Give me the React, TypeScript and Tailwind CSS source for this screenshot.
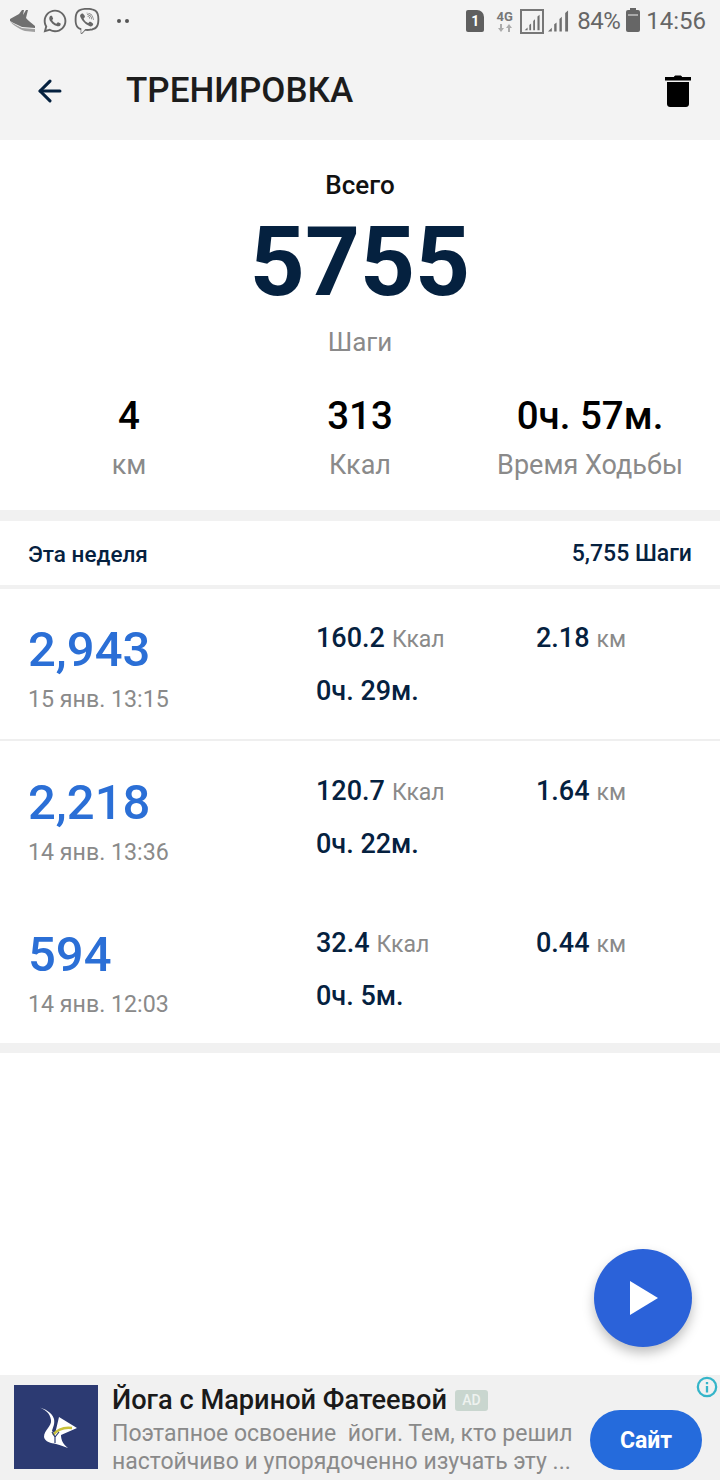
import { ArrowLeft } from "lucide-react";
import { FaViber, FaWhatsapp } from "react-icons/fa";

const workouts = [
  { steps: "2,943", date: "15 янв. 13:15", kcal: "160.2", km: "2.18", time: "0ч. 29м.", height: "h-[150px]" },
  { steps: "2,218", date: "14 янв. 13:36", kcal: "120.7", km: "1.64", time: "0ч. 22м.", height: "h-[152px]" },
  { steps: "594", date: "14 янв. 12:03", kcal: "32.4", km: "0.44", time: "0ч. 5м.", height: "h-[149px]" },
];

function Shoe() {
  return (
    <svg viewBox="0 0 25 22" className="h-[22px] w-[25px]">
      <path d="M0 9 L9 4 L12 0 L14 0 L13 5 L16 0 L18 0 L16 8 C18 11 22 13 25 16 L25 18 L12 17 C8 15 3 13 0 11 Z" fill="#707070" />
      <path d="M0 11.500 C4 14 8 16 12 18 L25 19 L25 22 L15 21 C9 19 3 15 0 11.500 Z" fill="#a0a0a0" />
    </svg>
  );
}

function SimCard() {
  return (
    <div className="flex h-[22px] w-[18px] items-center justify-center rounded-[2px] rounded-tr-[7px] bg-[#5f5f5f] text-[14px] leading-none font-bold text-white">
      1
    </div>
  );
}

function Bars({ className }: { className: string }) {
  return (
    <svg viewBox="0 0 22 24" className={className} fill="#6f6f6f">
      <path d="M0 23 L4 19 L4 23 Z" />
      <path d="M6.500 15.500 L9 13.500 L9 23 L6.500 23 Z" />
      <path d="M12 10 L14.500 7.500 L14.500 23 L12 23 Z" />
      <path d="M18 3.500 L21 1 L21 23 L18 23 Z" />
    </svg>
  );
}

function Stat({ value, label, className }: { value: string; label: string; className: string }) {
  return (
    <div className={`flex flex-col items-center ${className}`}>
      <span className="text-[38.500px] leading-[44px] font-medium text-black">{value}</span>
      <span className="mt-[10px] text-[27px] leading-[34px] text-[#8a8a8a]">{label}</span>
    </div>
  );
}

export default function App() {
  return (
    <div className="relative flex h-[1480px] w-[720px] flex-col overflow-hidden bg-white font-['Roboto',sans-serif]">
      <header className="h-[140px] shrink-0 bg-[#f3f3f3]">
        <div className="flex h-[42px] items-center pl-[10px] pr-[14px]">
          <Shoe />
          <FaWhatsapp className="ml-[7px] text-[26px] text-[#666]" />
          <FaViber className="ml-[6px] text-[26px] text-[#666]" />
          <div className="ml-[17px] flex gap-[4px]">
            <span className="h-[4px] w-[4px] rounded-full bg-[#555]" />
            <span className="h-[4px] w-[4px] rounded-full bg-[#555]" />
          </div>
          <div className="ml-auto flex items-center">
            <SimCard />
            <div className="ml-[12px] flex w-[17px] flex-col items-center">
              <span className="text-[13px] leading-[13px] font-bold text-[#777]">4G</span>
              <svg viewBox="0 0 14 8" className="mt-[1px] h-[8px] w-[14px]" fill="#aaa">
                <path d="M2 0h2v4h2L3 8 0 4h2zM10 8h2V4h2l-3-4-3 4h2z" />
              </svg>
            </div>
            <div className="ml-[7px] flex h-[25px] w-[24px] items-end justify-center border-2 border-[#777] pb-[1px]">
              <Bars className="h-[17px] w-[17px]" />
            </div>
            <Bars className="ml-[4px] h-[24px] w-[21px]" />
            <span className="ml-[8px] text-[24px] tracking-[-0.5px] leading-none text-[#666]">84%</span>
            <div className="relative ml-[6px] h-[22px] w-[14px] rounded-[2px] bg-[#666]">
              <span className="absolute top-[4px] left-[2px] h-[2px] w-[10px] bg-[#aaa]" />
              <span className="absolute -top-[2px] left-[4px] h-[2px] w-[6px] bg-[#666]" />
            </div>
            <span className="ml-[6px] text-[24px] leading-none text-[#666]">14:56</span>
          </div>
        </div>
        <div className="flex h-[98px] items-center pl-[33px] pr-[29px]">
          <ArrowLeft className="h-[34px] w-[34px] text-[#05213f]" strokeWidth={2.2} />
          <h1 className="ml-[59px] text-[35px] font-medium text-[#1c1c1c]">ТРЕНИРОВКА</h1>
          <svg viewBox="0 0 26 32" className="ml-auto h-[32px] w-[26px]" fill="#000">
            <path d="M9 2 C9 1 10 .5 11 .5 L15 .5 C16 .5 17 1 17 2 L26 2 L26 5.500 L0 5.500 L0 2 Z" />
            <path d="M2 7 L24 7 L24 29 C24 31 22.500 32 21 32 L5 32 C3.500 32 2 31 2 29 Z" />
          </svg>
        </div>
      </header>

      <section className="flex h-[370px] shrink-0 flex-col items-center">
        <p className="mt-[28px] text-[26px] leading-[34px] font-medium text-[#111]">Всего</p>
        <p className="mt-[4px] text-[96px] leading-[112px] font-bold text-[#05213f]">5755</p>
        <p className="mt-[7px] text-[26px] leading-[34px] text-[#8a8a8a]">Шаги</p>
        <div className="mt-[35px] flex w-full">
          <Stat value="4" label="км" className="w-[258px]" />
          <Stat value="313" label="Ккал" className="w-[204px]" />
          <Stat value="0ч. 57м." label="Время Ходьбы" className="w-[256px]" />
        </div>
      </section>
      <div className="h-[11px] shrink-0 bg-[#f1f1f1]" />

      <div className="flex h-[64px] shrink-0 items-center justify-between px-[28px] pt-[3px] font-medium text-[#05213f]">
        <span className="text-[22.500px]">Эта неделя</span>
        <span className="text-[23px]">5,755 Шаги</span>
      </div>
      <div className="h-[4px] shrink-0 bg-[#f1f1f1]" />

      {workouts.map((w, i) => (
        <div key={w.date} className="shrink-0">
          <div className={`grid grid-cols-[288px_220px_1fr] pl-[28px] ${w.height}`}>
            <div className="pt-[31px]">
              <p className="text-[49px] leading-[60px] font-medium text-[#2b6fd6]">{w.steps}</p>
              <p className="mt-[5px] text-[23.200px] leading-[28px] text-[#8a8a8a]">{w.date}</p>
            </div>
            <div className="pt-[32px]">
              <p className="leading-[34px] whitespace-nowrap">
                <span className="text-[27px] font-medium text-[#05213f]">{w.kcal}</span>
                <span className="ml-[7px] text-[23px] text-[#8a8a8a]">Ккал</span>
              </p>
              <p className="mt-[17px] text-[27px] leading-[30px] font-medium text-[#05213f]">{w.time}</p>
            </div>
            <p className="pt-[32px] leading-[34px] whitespace-nowrap">
              <span className="text-[27px] font-medium text-[#05213f]">{w.km}</span>
              <span className="ml-[7px] text-[23px] text-[#8a8a8a]">км</span>
            </p>
          </div>
          {i === 0 && <div className="mb-[1px] h-[2px] bg-[#efefef]" />}
        </div>
      ))}
      <div className="h-[10px] shrink-0 bg-[#f1f1f1]" />

      <footer className="relative mt-auto flex h-[105px] shrink-0 bg-[#f1f1f1] pt-[10px] pl-[14px]">
        <div className="h-[84px] w-[84px] shrink-0 bg-[#2c3a72]">
          <svg viewBox="0 0 84 84" className="h-[84px] w-[84px]">
            <path d="M24 22 C31 24 36 28 37 35 C38 41 30 45 30 52 C31 57 37 58 42 59 C47 60 50 62 54 63 C49 59 47 55 47 50 L63 43 L45 32 L41 49 L38 46 C39 42 41 39 40 34 C38 27 31 24 24 22 Z" fill="#fff" />
            <path d="M39 50 C43 45 50 42 58 43" fill="none" stroke="#c9c13a" strokeWidth="2.500" />
            <path d="M38 47 L41 52 L41 58 M45 47 L41 52" fill="none" stroke="#2c3a72" strokeWidth="1.200" />
          </svg>
        </div>
        <div className="ml-[14px] min-w-0">
          <p className="flex h-[30px] items-center whitespace-nowrap text-[27.200px] font-medium text-[#1a1a1a]">
            Йога с Мариной Фатеевой
            <span className="ml-[8px] flex h-[21px] w-[33px] items-center justify-center rounded-[3px] bg-[#c9d6cf] text-[14px] font-medium text-[#eef2ef]">
              AD
            </span>
          </p>
          <p className="mt-[5px] text-[23px] leading-[28px] whitespace-pre text-[#8a8a8a]">
            {"Поэтапное освоение  йоги. Тем, кто решил\nнастойчиво и упорядоченно изучать эту ..."}
          </p>
        </div>
        <div className="absolute top-[35px] right-[18px] flex h-[60px] w-[112px] items-center justify-center rounded-full bg-[#256bdc] pt-[3px] text-[23px] font-bold text-white">
          Сайт
        </div>
        <svg viewBox="0 0 24 24" className="absolute top-[1px] right-[2px] h-[22px] w-[22px]" fill="none" stroke="#35b5c9" strokeWidth="2.500">
          <circle cx="12" cy="12" r="10" />
          <path d="M12 11v7M12 6.500v2.500" />
        </svg>
      </footer>

      <button className="absolute top-[1249px] left-[594px] flex h-[98px] w-[98px] items-center justify-center rounded-full bg-[#2b62d9] shadow-[0_6px_12px_rgba(0,0,0,0.25)]">
        <svg viewBox="0 0 28 34" className="ml-[1px] h-[34px] w-[28px]" fill="#fff">
          <path d="M0 0 L28 17 L0 34 Z" />
        </svg>
      </button>
    </div>
  );
}
